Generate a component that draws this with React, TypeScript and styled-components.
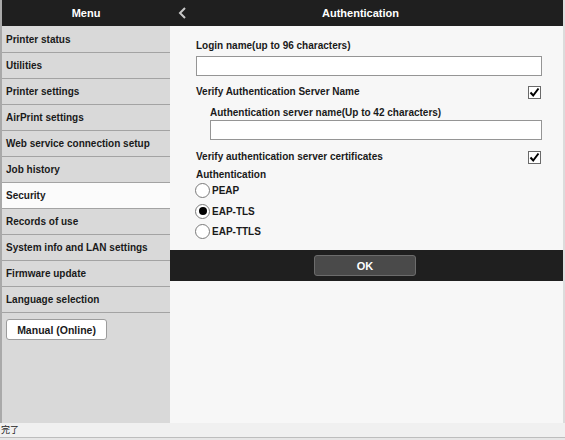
import React from 'react';
import styled, { createGlobalStyle } from 'styled-components';

const GlobalStyle = createGlobalStyle`
  html, body {
    margin: 0;
    padding: 0;
    background: #f0f0f0;
  }
  body {
    font-family: "Liberation Sans", Arial, sans-serif;
  }
`;

const Window = styled.div`
  width: 565px;
  height: 440px;
  display: flex;
  flex-direction: column;
  overflow: hidden;
  background: #e6e6e6;
`;

const Body = styled.div`
  display: flex;
  height: 423px;
`;

const Sidebar = styled.nav`
  width: 168px;
  border-left: 2px solid #a9a9a9;
  background: #d9d9d9;
  display: flex;
  flex-direction: column;
`;

const SideHeader = styled.div`
  height: 26px;
  background: #1f1f1f;
  color: #fff;
  display: flex;
  align-items: center;
  justify-content: center;
  font-weight: bold;
  font-size: 11px;
`;

const MenuList = styled.ul`
  list-style: none;
  margin: 1px 0 0;
  padding: 0;
`;

const MenuItem = styled.li<{ $active?: boolean }>`
  height: 25px;
  border-bottom: 1px solid #a3a3a3;
  background: ${p => (p.$active ? '#fbfbfb' : '#d9d9d9')};
  display: flex;
  align-items: center;
  padding-left: 4px;
  font-size: 10px;
  font-weight: bold;
  color: #1a1a1a;
`;

const ManualButton = styled.button`
  margin: 6px 0 0 4px;
  width: 101px;
  height: 21px;
  background: #fff;
  border: 1px solid #9c9c9c;
  border-radius: 3px;
  font-family: inherit;
  font-size: 10.5px;
  font-weight: bold;
  color: #1a1a1a;
  padding: 0;
`;

const Content = styled.main`
  width: 393px;
  background: #f7f7f7;
  border-right: 2px solid #dcdcdc;
  display: flex;
  flex-direction: column;
`;

const TopBar = styled.div`
  height: 26px;
  background: #1f1f1f;
  color: #fff;
  display: grid;
  grid-template-columns: 24px 1fr 36px;
  align-items: center;
  font-weight: bold;
  font-size: 11px;
`;

const Back = styled.div`
  padding-left: 8px;
  display: flex;
  align-items: center;
`;

const Title = styled.div`
  text-align: center;
`;

const Form = styled.div`
  padding: 14px 21px 0 26px;
  height: 210px;
  display: flex;
  flex-direction: column;
`;

const Label = styled.div<{ $indent?: boolean; $top?: number }>`
  font-size: 10px;
  font-weight: bold;
  color: #1a1a1a;
  line-height: 12px;
  margin-left: ${p => (p.$indent ? '14px' : '0')};
  margin-top: ${p => p.$top ?? 0}px;
`;

const TextInput = styled.input<{ $indent?: boolean }>`
  box-sizing: border-box;
  height: 20px;
  margin: ${p => (p.$indent ? '1px 0 0 14px' : '4px 0 0 0')};
  width: ${p => (p.$indent ? '332px' : '346px')};
  border: 1px solid #959595;
  background: #fff;
  padding: 0 4px;
`;

const CheckRow = styled.div<{ $top: number }>`
  display: flex;
  justify-content: space-between;
  align-items: center;
  height: 14px;
  margin-top: ${p => p.$top}px;
  padding-right: 1px;
`;

const Box = styled.span`
  box-sizing: border-box;
  width: 13px;
  height: 13px;
  border: 1px solid #6a6a6a;
  background: #fff;
  display: flex;
  align-items: center;
  justify-content: center;
`;

const RadioGroup = styled.div`
  display: flex;
  flex-direction: column;
  gap: 5.5px;
  margin-top: 2px;
`;

const RadioRow = styled.label`
  display: flex;
  align-items: center;
  gap: 2px;
  height: 15px;
  font-size: 10px;
  font-weight: bold;
  color: #1a1a1a;
  margin-left: -1px;
`;

const Circle = styled.span<{ $on?: boolean }>`
  box-sizing: border-box;
  width: 15px;
  height: 15px;
  border-radius: 50%;
  border: 1px solid #7a7a7a;
  background: #fff;
  display: flex;
  align-items: center;
  justify-content: center;
  &::after {
    content: '';
    display: ${p => (p.$on ? 'block' : 'none')};
    width: 8px;
    height: 8px;
    border-radius: 50%;
    background: #000;
  }
`;

const FooterBar = styled.div`
  height: 31px;
  background: #1f1f1f;
  display: flex;
  justify-content: center;
  align-items: center;
`;

const OkButton = styled.button`
  width: 102px;
  height: 21px;
  margin-left: -3px;
  background: #4a4a4a;
  border: 1px solid #6c6c6c;
  border-radius: 3px;
  color: #fff;
  font-family: inherit;
  font-weight: bold;
  font-size: 11px;
  padding: 0;
`;

const StatusBar = styled.div`
  height: 14px;
  background: #f0f0f0;
  border-bottom: 1px solid #bdbdbd;
  font-family: "Noto Sans CJK JP", sans-serif;
  font-size: 9px;
  line-height: 14px;
  color: #222;
  padding-left: 1px;
`;

const menu = [
  'Printer status',
  'Utilities',
  'Printer settings',
  'AirPrint settings',
  'Web service connection setup',
  'Job history',
  'Security',
  'Records of use',
  'System info and LAN settings',
  'Firmware update',
  'Language selection',
];

const Check = () => (
  <Box>
    <svg width="11" height="11" viewBox="0 0 11 11">
      <path d="M1.5 5.5 L4.2 8.5 L9.5 1.5" fill="none" stroke="#000" strokeWidth="2" />
    </svg>
  </Box>
);

const radios = [
  { name: 'PEAP', on: false },
  { name: 'EAP-TLS', on: true },
  { name: 'EAP-TTLS', on: false },
];

export default function App() {
  return (
    <>
      <GlobalStyle />
      <Window>
        <Body>
          <Sidebar>
            <SideHeader>Menu</SideHeader>
            <MenuList>
              {menu.map(m => (
                <MenuItem key={m} $active={m === 'Security'}>
                  {m}
                </MenuItem>
              ))}
            </MenuList>
            <ManualButton>Manual (Online)</ManualButton>
          </Sidebar>
          <Content>
            <TopBar>
              <Back>
                <svg width="9" height="12" viewBox="0 0 9 12">
                  <path d="M7 1 L2 6 L7 11" fill="none" stroke="#c8c8c8" strokeWidth="2" />
                </svg>
              </Back>
              <Title>Authentication</Title>
            </TopBar>
            <Form>
              <Label>Login name(up to 96 characters)</Label>
              <TextInput />
              <CheckRow $top={9}>
                <Label>Verify Authentication Server Name</Label>
                <Check />
              </CheckRow>
              <Label $indent $top={8}>
                Authentication server name(Up to 42 characters)
              </Label>
              <TextInput $indent />
              <CheckRow $top={10}>
                <Label>Verify authentication server certificates</Label>
                <Check />
              </CheckRow>
              <Label $top={5}>Authentication</Label>
              <RadioGroup>
                {radios.map(r => (
                  <RadioRow key={r.name}>
                    <Circle $on={r.on} />
                    {r.name}
                  </RadioRow>
                ))}
              </RadioGroup>
            </Form>
            <FooterBar>
              <OkButton>OK</OkButton>
            </FooterBar>
          </Content>
        </Body>
        <StatusBar>完了</StatusBar>
      </Window>
    </>
  );
}
